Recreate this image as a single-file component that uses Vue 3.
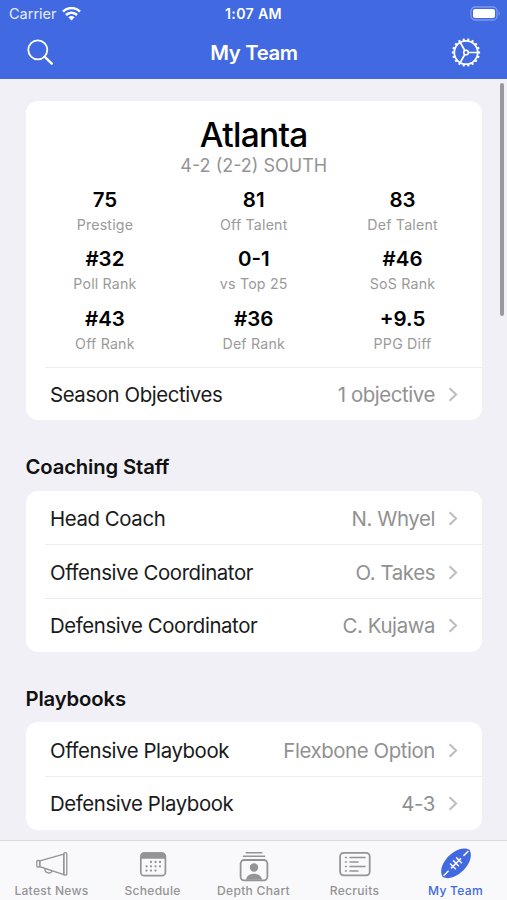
<script setup>
const stats = [
  { value: '75', label: 'Prestige' },
  { value: '81', label: 'Off Talent' },
  { value: '83', label: 'Def Talent' },
  { value: '#32', label: 'Poll Rank' },
  { value: '0-1', label: 'vs Top 25' },
  { value: '#46', label: 'SoS Rank' },
  { value: '#43', label: 'Off Rank' },
  { value: '#36', label: 'Def Rank' },
  { value: '+9.5', label: 'PPG Diff' },
]
const sections = [
  {
    title: 'Coaching Staff',
    rows: [
      { label: 'Head Coach', value: 'N. Whyel' },
      { label: 'Offensive Coordinator', value: 'O. Takes' },
      { label: 'Defensive Coordinator', value: 'C. Kujawa' },
    ],
  },
  {
    title: 'Playbooks',
    rows: [
      { label: 'Offensive Playbook', value: 'Flexbone Option' },
      { label: 'Defensive Playbook', value: '4-3' },
    ],
  },
]
const tabs = [
  { id: 'news', label: 'Latest News' },
  { id: 'schedule', label: 'Schedule' },
  { id: 'depth', label: 'Depth Chart' },
  { id: 'recruits', label: 'Recruits' },
  { id: 'team', label: 'My Team' },
]
const teeth = Array.from({ length: 18 }, (_, i) => i * 20)
const calendarDots = [
  [13, 11], [17.5, 11], [22, 11],
  [8.5, 15.3], [13, 15.3], [17.5, 15.3], [22, 15.3],
  [8.5, 19.6], [13, 19.6], [17.5, 19.6],
]
const listLines = [
  [7.5, 26], [12, 19], [16.5, 26], [21, 19],
]
</script>

<template>
  <div class="screen">
    <header class="header">
      <div class="status">
        <div class="carrier">
          <span>Carrier</span>
          <svg width="19" height="14" viewBox="0 0 19 14" fill="none" stroke="#fff" stroke-width="2.5">
            <path d="M1 4.6a12 12 0 0 1 17 0" />
            <path d="M4 8a7.8 7.8 0 0 1 11 0" />
            <path d="M9.5 13.4 6.4 10.3a4.4 4.4 0 0 1 6.2 0Z" fill="#fff" stroke="none" />
          </svg>
        </div>
        <span class="clock">1:07 AM</span>
        <svg class="battery" width="31" height="15" viewBox="0 0 31 15">
          <rect x="1" y="1" width="26" height="13" rx="4" fill="none" stroke="#8096ec" stroke-width="1.3" />
          <rect x="3" y="3" width="22" height="9" rx="2" fill="#fff" />
          <path d="M28.5 5.2c1.8.8 1.8 3.8 0 4.6z" fill="#8096ec" />
        </svg>
      </div>
      <div class="nav">
        <svg width="28" height="28" viewBox="0 0 28 28" fill="none" stroke="#fff" stroke-linecap="round">
          <circle cx="11.8" cy="10.8" r="9.5" stroke-width="1.8" />
          <path d="m18.8 17.9 7 6.8" stroke-width="2.4" />
        </svg>
        <h1>My Team</h1>
        <svg width="30" height="30" viewBox="0 0 30 30" fill="none" stroke="#fff">
          <circle cx="15" cy="14.5" r="11.7" stroke-width="1.8" />
          <path v-for="a in teeth" :key="a" d="M15 2.7V.4" stroke-width="2.1" :transform="`rotate(${a + 10} 15 14.5)`" />
          <circle cx="15" cy="14.5" r="2.3" stroke-width="1.6" />
          <path d="M17.3 14.5h9.4M13.8 12.5 9.2 4.4M13.8 16.5l-4.6 8.1" stroke-width="1.7" />
        </svg>
      </div>
    </header>

    <main class="content">
      <section class="card">
        <div class="summary">
          <h2>Atlanta</h2>
          <p class="record">4-2 (2-2) SOUTH</p>
          <div class="stats">
            <div v-for="s in stats" :key="s.label" class="stat">
              <strong>{{ s.value }}</strong>
              <span>{{ s.label }}</span>
            </div>
          </div>
        </div>
        <div class="row divided">
          <span class="label">Season Objectives</span>
          <span class="value">1 objective</span>
          <svg class="chevron" width="10" height="15" viewBox="0 0 10 15"><path d="m1.5 1.2 6.6 6.3-6.6 6.3" /></svg>
        </div>
      </section>

      <template v-for="section in sections" :key="section.title">
        <h3>{{ section.title }}</h3>
        <section class="card">
          <div v-for="(row, i) in section.rows" :key="row.label" class="row" :class="{ divided: i > 0 }">
            <span class="label">{{ row.label }}</span>
            <span class="value">{{ row.value }}</span>
            <svg class="chevron" width="10" height="15" viewBox="0 0 10 15"><path d="m1.5 1.2 6.6 6.3-6.6 6.3" /></svg>
          </div>
        </section>
      </template>
      <div class="scrollbar"></div>
    </main>

    <nav class="tabs">
      <div v-for="tab in tabs" :key="tab.id" class="tab" :class="{ active: tab.id === 'team' }">
        <svg v-if="tab.id === 'news'" width="34" height="32" viewBox="0 0 34 32" fill="none" stroke="currentColor" stroke-width="1.3">
          <rect x="1.8" y="11.5" width="3" height="6.5" rx="1" />
          <path d="M4.8 11.8 28.8 5v20.5l-24-7.8z" />
          <rect x="28.8" y="3.6" width="3" height="22.6" rx="1.3" />
          <path d="M10 19.5c-.5 5.5 6.5 5.5 7 2.3" />
        </svg>
        <svg v-else-if="tab.id === 'schedule'" width="34" height="32" viewBox="0 0 34 32">
          <g transform="translate(2 -.7)">
            <rect x="2.8" y="4.8" width="24.6" height="22.6" rx="3.5" fill="none" stroke="currentColor" stroke-width="1.7" />
            <path d="M2.5 10.5V8q0-4 4-4h17q4 0 4 4v2.5z" fill="currentColor" />
            <circle v-for="([x, y], i) in calendarDots" :key="i" :cx="x" :cy="y + 2.7" r="1.15" fill="currentColor" />
          </g>
        </svg>
        <svg v-else-if="tab.id === 'depth'" width="34" height="32" viewBox="0 0 34 32" fill="none" stroke="currentColor" stroke-width="1.8">
          <path d="M9.3 3.7h15.4M6.4 7.3h21.2" stroke-linecap="round" stroke-width="1.6" />
          <rect x="3.6" y="11" width="26.8" height="20.3" rx="3.5" />
          <circle cx="17" cy="18.5" r="4.2" fill="currentColor" stroke="none" />
          <path d="M9 30.8c1-8 15-8 16 0z" fill="currentColor" stroke="none" />
        </svg>
        <svg v-else-if="tab.id === 'recruits'" width="34" height="32" viewBox="0 0 34 32" fill="none" stroke="currentColor">
          <g transform="translate(0 -1)">
            <rect x="2.1" y="4.9" width="29.6" height="22.4" rx="3.5" stroke-width="1.8" />
            <path v-for="([y, end], i) in listLines" :key="i" :d="`M7.5 ${y + 2}h.8M12 ${y + 2}H${end + 1}`" stroke-width="1.6" stroke-linecap="round" />
          </g>
        </svg>
        <svg v-else width="34" height="32" viewBox="0 0 34 32">
          <g transform="rotate(-45 17 14.3)">
            <path d="M-2 14.3C1.5 .6 32.5 .6 36 14.3C32.5 28 1.5 28-2 14.3Z" fill="currentColor" />
            <path d="M-.5 14.3H6.5M27.5 14.3h7M9.8 14.3h14.4M12.7 10.2v8.2M17 10.2v8.2M21.3 10.2v8.2" stroke="#f9f9fb" stroke-width="1.5" />
          </g>
        </svg>
        <span>{{ tab.label }}</span>
      </div>
    </nav>
  </div>
</template>

<style>
body {
  margin: 0;
}
</style>

<style scoped>
.screen {
  display: flex;
  flex-direction: column;
  width: 507px;
  height: 900px;
  overflow: hidden;
  background: #f1f0f6;
  font-family: Inter, 'Liberation Sans', sans-serif;
  color: #000;
}
.screen * {
  box-sizing: border-box;
}
h1, h2, h3, p {
  margin: 0;
}
.header {
  flex: none;
  height: 79px;
  background: #4169e1;
  color: #fff;
}
.status {
  display: grid;
  grid-template-columns: 1fr auto 1fr;
  align-items: center;
  height: 27px;
  padding: 0 6px 0 9px;
  font-size: 14.5px;
}
.carrier {
  display: flex;
  align-items: center;
  gap: 5px;
  color: #e9edfc;
}
.clock {
  margin-right: 3px;
  font-weight: 600;
  font-size: 14.2px;
  letter-spacing: 0.3px;
}
.battery {
  justify-self: end;
}
.nav {
  display: flex;
  align-items: center;
  justify-content: space-between;
  height: 51px;
  padding: 0 26px;
}
h1 {
  padding-left: 3px;
  font-size: 20.3px;
  font-weight: 600;
  letter-spacing: -0.35px;
}
.content {
  position: relative;
  flex: 1;
  min-height: 0;
  overflow: hidden;
  padding: 21.5px 25px 0 25.5px;
}
.card {
  background: #fff;
  border-radius: 12px;
}
.summary {
  height: 266px;
  padding: 14px 5px 0;
  text-align: center;
}
h2 {
  font-size: 33.5px;
  line-height: 40px;
  font-weight: 500;
  letter-spacing: -0.7px;
}
.record {
  font-size: 18px;
  line-height: 22px;
  color: #949494;
}
.stats {
  display: grid;
  grid-template-columns: repeat(3, 1fr);
  grid-auto-rows: 59.5px;
  padding-top: 9px;
}
.stat {
  display: flex;
  flex-direction: column;
}
.stat strong {
  font-size: 20.5px;
  line-height: 28px;
  font-weight: 600;
}
.stat span {
  font-size: 14.2px;
  line-height: 22px;
  letter-spacing: 0.2px;
  color: #9a9a9a;
}
.row {
  position: relative;
  display: flex;
  align-items: center;
  height: 53.8px;
  padding: 1.6px 24px 0 24.5px;
  font-size: 20.4px;
  letter-spacing: -0.41px;
}
.divided::before {
  content: '';
  position: absolute;
  top: 0;
  left: 19px;
  right: 0;
  height: 1px;
  background: #ededef;
}
.label {
  flex: 1;
  color: #1a1a1a;
}
.value {
  color: #919191;
}
.chevron {
  margin-left: 13px;
  fill: none;
  stroke: #bdbdbf;
  stroke-width: 2;
}
h3 {
  height: 70.4px;
  padding-top: 33px;
  font-size: 20.3px;
  line-height: 28px;
  font-weight: 600;
  letter-spacing: -0.15px;
  color: #111;
}
.scrollbar {
  position: absolute;
  top: 4px;
  right: 3px;
  width: 4px;
  height: 233px;
  border-radius: 2px;
  background: #98989d;
}
.tabs {
  flex: none;
  display: grid;
  grid-template-columns: repeat(5, 101px);
  justify-content: center;
  height: 60px;
  border-top: 1px solid #d9d9dd;
  background: #f9f9fb;
}
.tab {
  display: flex;
  flex-direction: column;
  align-items: center;
  padding-top: 8px;
  color: #949496;
  font-size: 12.1px;
  font-weight: 500;
  line-height: 18px;
  letter-spacing: 0.27px;
}
.tab span {
  margin-top: 1px;
}
.tab svg {
  overflow: visible;
}
.active {
  color: #4169e1;
}
</style>
